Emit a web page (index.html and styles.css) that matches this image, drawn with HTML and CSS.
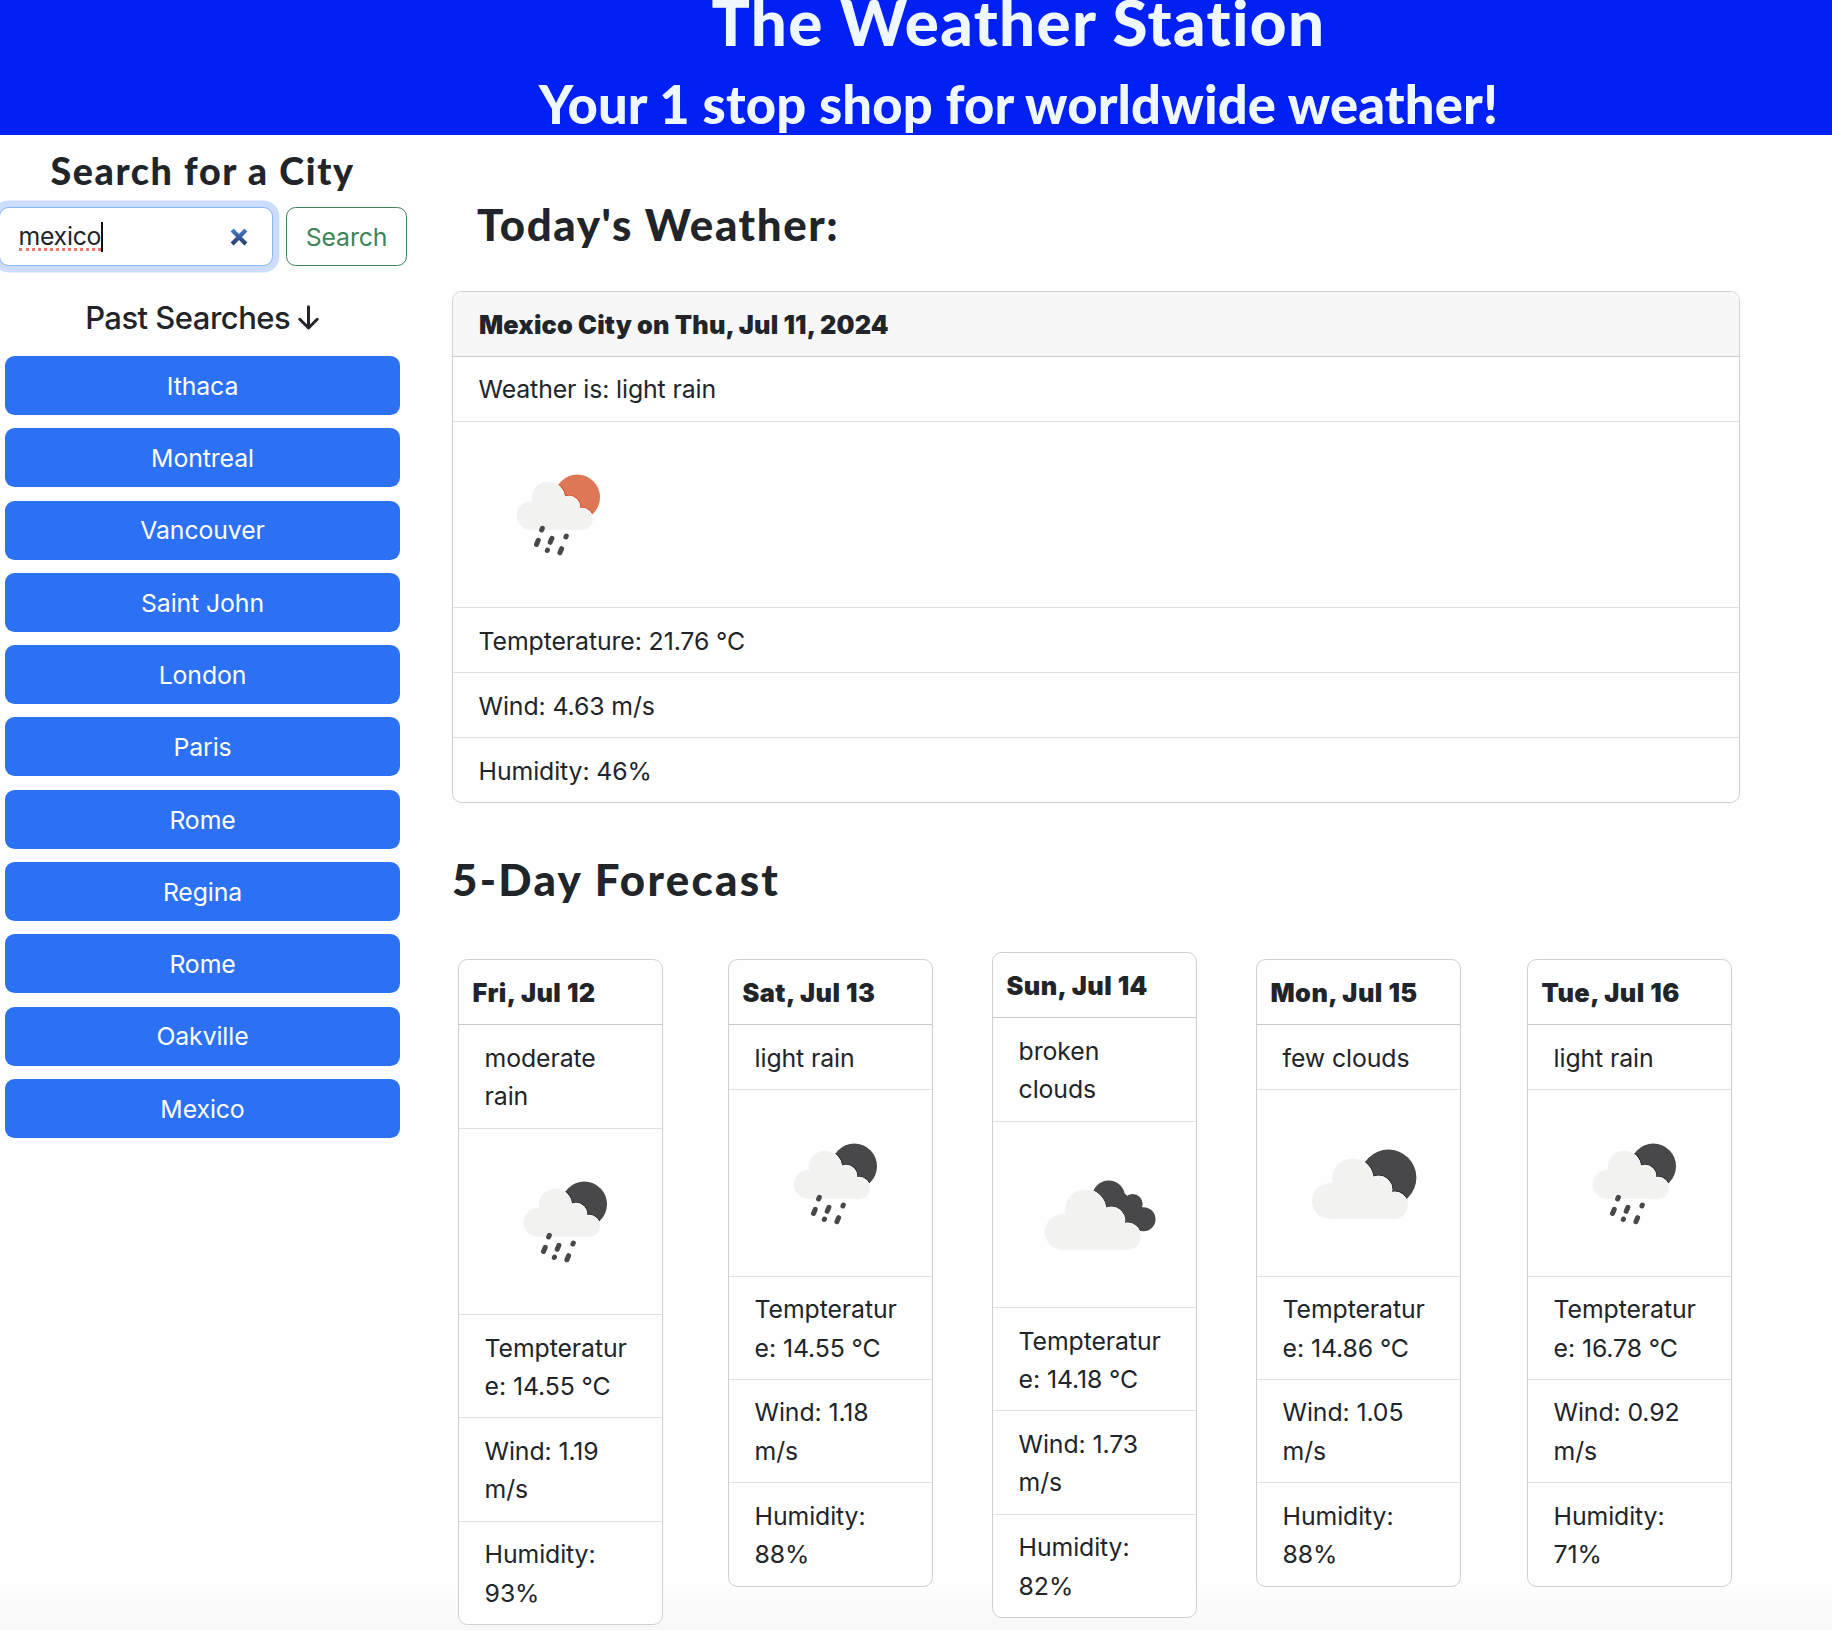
FILE: index.html
```html
<!DOCTYPE html>
<html lang="en">
<head>
<meta charset="utf-8">
<title>The Weather Station</title>
<link rel="stylesheet" href="styles.css">
</head>
<body>
<svg class="defs" aria-hidden="true">
  <defs>
    <g id="rain-cloud">
      <circle cx="53" cy="81.4" r="14.3"/><circle cx="70.3" cy="64" r="16.3"/><circle cx="91" cy="73" r="10.8"/><circle cx="104" cy="85" r="10.8"/>
      <path d="M53 70h42v15h9v10.8H53z"/>
    </g>
    <g id="big-cloud">
      <circle cx="46.7" cy="98" r="17.7"/><circle cx="69.7" cy="75.8" r="20.3"/><circle cx="95.5" cy="86.5" r="13.5"/><circle cx="111.5" cy="102.3" r="13.4"/>
      <path d="M46.7 82h52v20h13v13.7H46.7z"/>
    </g>
    <clipPath id="rain-disc"><circle cx="99.3" cy="63.3" r="22.7"/></clipPath>
    <clipPath id="big-disc"><circle cx="105.4" cy="74.6" r="28"/></clipPath>
    <g id="rain">
      <circle cx="99.3" cy="63.3" r="22.7"/>
      <g clip-path="url(#rain-disc)"><use href="#rain-cloud" class="edge"/></g>
      <use href="#rain-cloud" class="gap"/>
      <use href="#rain-cloud" class="pale"/>
      <path class="drops" d="M64.3 94.4l-.7 1.6M60.2 106.4l-1.7 4M73.9 104.3l-1.7 4M88.3 102l-.4 .9M69.5 116.1l-.2 .4M83.6 114.7l-1.7 4"/>
    </g>
    <g id="few">
      <circle cx="105.4" cy="74.6" r="28"/>
      <g clip-path="url(#big-disc)"><use href="#big-cloud" class="edge"/></g>
      <use href="#big-cloud" class="gap"/>
      <use href="#big-cloud" class="pale"/>
    </g>
    <g id="broken">
      <circle cx="89.7" cy="62.8" r="16.3"/><circle cx="113.7" cy="70" r="10"/><circle cx="124.5" cy="85.2" r="12"/>
      <path d="M80 60l26 0 18 14-2 23-20 0-22-20z"/>
      <use href="#big-cloud" x="-3.2" class="gap"/>
      <use href="#big-cloud" x="-3.2" class="pale"/>
    </g>
    <linearGradient id="x-grad" x1="0" y1="0" x2="0" y2="16" gradientUnits="userSpaceOnUse"><stop offset="0" stop-color="#4b80cf"/><stop offset="1" stop-color="#263a66"/></linearGradient>
  </defs>
</svg>

<header class="banner">
  <h1 class="banner-title">The Weather Station</h1>
  <h2 class="banner-tagline">Your 1 stop shop for worldwide weather!</h2>
</header>

<div class="page">
  <aside class="sidebar">
    <h3 class="search-title">Search for a City</h3>
    <div class="search-form">
      <div class="search-input"><span class="typed">mexico</span><span class="caret"></span>
        <svg class="clear" width="18" height="18" viewBox="0 0 17 16"><path d="M2 1.5l13 13M15 1.5l-13 13" stroke="url(#x-grad)" stroke-width="4"/></svg>
      </div>
      <button class="search-btn">Search</button>
    </div>
    <h4 class="past-title">Past Searches <svg class="arrow" width="21" height="25" viewBox="0 0 21 25"><path d="M10.5 1.8v21M1.8 14.3l8.7 8.7 8.7-8.7"/></svg></h4>
    <div class="past-list">
      <button class="past">Ithaca</button>
      <button class="past">Montreal</button>
      <button class="past">Vancouver</button>
      <button class="past">Saint John</button>
      <button class="past">London</button>
      <button class="past">Paris</button>
      <button class="past">Rome</button>
      <button class="past">Regina</button>
      <button class="past">Rome</button>
      <button class="past">Oakville</button>
      <button class="past">Mexico</button>
    </div>
  </aside>

  <main class="content">
    <h2 class="section-title today-title">Today's Weather:</h2>
    <section class="card today">
      <div class="card-header">Mexico City on Thu, Jul 11, 2024</div>
      <ul class="rows">
        <li>Weather is: light rain</li>
        <li class="pic"><svg class="icon day" viewBox="0 0 160 160"><use href="#rain"/></svg></li>
        <li>Tempterature: 21.76 °C</li>
        <li>Wind: 4.63 m/s</li>
        <li>Humidity: 46%</li>
      </ul>
    </section>

    <h2 class="section-title forecast-title">5-Day Forecast</h2>
    <div class="forecast">
      <section class="card day-card">
        <div class="card-header">Fri, Jul 12</div>
        <ul class="rows">
          <li>moderate<br>rain</li>
          <li class="pic"><svg class="icon" viewBox="0 0 160 160"><use href="#rain"/></svg></li>
          <li>Tempteratur<br>e: 14.55 °C</li>
          <li>Wind: 1.19<br>m/s</li>
          <li>Humidity:<br>93%</li>
        </ul>
      </section>
      <section class="card day-card second">
        <div class="card-header">Sat, Jul 13</div>
        <ul class="rows">
          <li>light rain</li>
          <li class="pic"><svg class="icon" viewBox="0 0 160 160"><use href="#rain"/></svg></li>
          <li>Tempteratur<br>e: 14.55 °C</li>
          <li>Wind: 1.18<br>m/s</li>
          <li>Humidity:<br>88%</li>
        </ul>
      </section>
      <section class="card day-card raised">
        <div class="card-header">Sun, Jul 14</div>
        <ul class="rows">
          <li>broken<br>clouds</li>
          <li class="pic"><svg class="icon" viewBox="0 0 160 160"><use href="#broken"/></svg></li>
          <li>Tempteratur<br>e: 14.18 °C</li>
          <li>Wind: 1.73<br>m/s</li>
          <li>Humidity:<br>82%</li>
        </ul>
      </section>
      <section class="card day-card">
        <div class="card-header">Mon, Jul 15</div>
        <ul class="rows">
          <li>few clouds</li>
          <li class="pic"><svg class="icon" viewBox="0 0 160 160"><use href="#few"/></svg></li>
          <li>Tempteratur<br>e: 14.86 °C</li>
          <li>Wind: 1.05<br>m/s</li>
          <li>Humidity:<br>88%</li>
        </ul>
      </section>
      <section class="card day-card last">
        <div class="card-header">Tue, Jul 16</div>
        <ul class="rows">
          <li>light rain</li>
          <li class="pic"><svg class="icon" viewBox="0 0 160 160"><use href="#rain"/></svg></li>
          <li>Tempteratur<br>e: 16.78 °C</li>
          <li>Wind: 0.92<br>m/s</li>
          <li>Humidity:<br>71%</li>
        </ul>
      </section>
    </div>
  </main>
</div>
</body>
</html>
```
FILE: styles.css
```css
* { box-sizing: border-box; }
html { background: #fefefe; }
body {
  margin: 0;
  height: 1630px;
  overflow: hidden;
  font: 400 24.8px/38.4px Inter, "Liberation Sans", sans-serif;
  letter-spacing: -0.09px;
  color: #212529;
  background: linear-gradient(to bottom, #fefefe 1585px, #f7f7f7 1630px);
}
h1, h2, h3, h4, ul { margin: 0; padding: 0; }
h1, h2, h3 { font-family: Lato, sans-serif; font-weight: 900; }
.defs { position: absolute; width: 0; height: 0; }

.banner {
  height: 135px;
  padding-left: 205px;
  text-align: center;
  color: #f0f8ff;
  background: #0020f5;
}
.banner-title { font-size: 63.7px; line-height: 44px; letter-spacing: 1.35px; margin-bottom: 33px; }
.banner-tagline { font-size: 52.5px; line-height: 54px; letter-spacing: 0.16px; }

.page { display: flex; }
.sidebar { width: 407px; margin-right: 45px; padding-top: 13px; }
.search-title { font-size: 37.7px; line-height: 46px; letter-spacing: 1.6px; width: 405px; text-align: center; }
.search-form { display: flex; gap: 13px; margin-top: 13px; }
.search-input {
  display: flex;
  align-items: center;
  width: 274px;
  height: 59px;
  margin-left: -1px;
  padding: 0 24px 0 18.5px;
  border: 1px solid #86b7fe;
  border-radius: 9.6px;
  background: #fff;
  box-shadow: 0 0 0 6.4px #ccdcfc;
}
.typed { line-height: 28px; height: 29px; border-bottom: 3px dotted #f0776c; letter-spacing: -0.25px; }
.caret { width: 2px; height: 30px; margin-left: 0; background: #111; }
.clear { margin-left: auto; }
.search-btn {
  width: 121px;
  height: 59px;
  padding: 1px 0 0;
  border: 1px solid #3d8459;
  border-radius: 9.6px;
  font: inherit;
  letter-spacing: -0.1px;
  color: #3d8459;
  background: #fff;
}
.past-title { width: 404px; margin-top: 33px; font-size: 31px; line-height: 38px; font-weight: 500; letter-spacing: -0.53px; text-align: center; }
.arrow { fill: none; stroke: #212529; stroke-width: 3; stroke-linecap: round; stroke-linejoin: round; vertical-align: -1px; }
.past-list { display: flex; flex-direction: column; gap: 13.3px; width: 395px; margin: 19px 0 0 5px; }
.past { height: 59px; padding: 1px 0 0; border: 0; border-radius: 9.6px; font: inherit; letter-spacing: -0.1px; color: #fff; background: #2c71f4; }

.content { width: 1288px; }
.section-title { font-size: 43.8px; line-height: 52px; }
.today-title { margin: 63px 0 41px; padding-left: 25px; letter-spacing: 1.59px; }
.forecast-title { margin-top: 50.4px; letter-spacing: 2.3px; }
.card { border: 1px solid #d0d0d1; border-radius: 9.6px; background: #fefefe; }
.card-header {
  height: 65px;
  padding: 14px 26px 12px;
  border-bottom: 1px solid #c9cacb;
  border-radius: 9px 9px 0 0;
  font-size: 25.3px;
  font-weight: 900;
  letter-spacing: 0.15px;
  white-space: nowrap;
}
.today .card-header { background: #f7f7f7; }
.rows { list-style: none; }
.rows li { padding: 13.4px 0 12.05px 25.6px; border-bottom: 1px solid #dee0e3; white-space: nowrap; }
.rows li:last-child { border-bottom: 0; }
.rows .pic { height: 186.6px; padding: 12.3px 0 0 25.6px; }
.today .pic { padding-left: 24.8px; }
.icon { display: block; width: 160px; height: 160px; overflow: visible; fill: #48484a; --edge: #2f2f31; }
.icon.day { fill: #de7755; --edge: #dc4f2d; }
.edge { fill: var(--edge); stroke: var(--edge); stroke-width: 2.6; }
.gap { fill: #fdfdfd; stroke: #fdfdfd; stroke-width: 1; }
.pale { fill: #f2f2f1; }
.drops { fill: none; stroke: #48484a; stroke-width: 5; stroke-linecap: round; }

.forecast { display: flex; align-items: flex-start; gap: 59px; margin: 47px 0 0 6px; }
.day-card { flex: none; width: 205px; margin-top: 7px; }
.day-card.raised { margin-top: 0; }
.day-card.second { margin-left: 6px; }
.day-card.last { margin-left: 7px; }
.day-card .card-header { padding-left: 13.4px; letter-spacing: 0.5px; }
```
